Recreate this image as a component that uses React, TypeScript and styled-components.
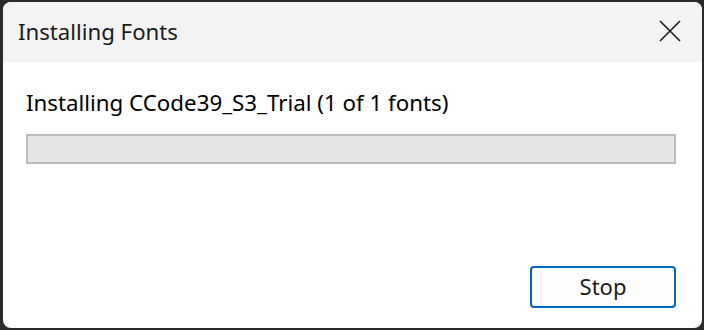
import React from 'react'
import styled, { createGlobalStyle } from 'styled-components'

const GlobalStyle = createGlobalStyle`
  html, body {
    margin: 0;
    padding: 0;
    background: #2b2b2b;
  }
  body {
    font-family: 'Noto Sans', 'Segoe UI', sans-serif;
  }
`

const Frame = styled.div`
  width: 704px;
  height: 330px;
  box-sizing: border-box;
  padding: 2px 2px 2px 3px;
  background: #2b2b2b;
`

const Window = styled.div`
  height: 100%;
  display: flex;
  flex-direction: column;
  background: #ffffff;
  border-radius: 8px;
  overflow: hidden;
`

const TitleBar = styled.div`
  height: 60px;
  flex-shrink: 0;
  display: flex;
  align-items: center;
  justify-content: space-between;
  background: #f3f3f3;
  padding: 0 0 0 15px;
`

const Title = styled.span`
  font-size: 22.2px;
  color: #1a1a1a;
  margin-top: -2px;
`

const CloseButton = styled.button`
  width: 64px;
  height: 56px;
  border: none;
  background: transparent;
  display: flex;
  align-items: center;
  justify-content: center;
  padding: 0;
  margin-top: -2px;
`

const Body = styled.div`
  flex: 1;
  display: flex;
  flex-direction: column;
  padding: 27px 26px 20px 23px;
`

const Message = styled.div`
  font-size: 22.3px;
  color: #000;
  line-height: 28px;
`

const ProgressTrack = styled.div`
  margin-top: 17px;
  height: 30px;
  box-sizing: border-box;
  border: 2px solid #bcbcbc;
  background: #e6e6e6;
`

const Footer = styled.div`
  margin-top: auto;
  display: flex;
  justify-content: flex-end;
`

const Button = styled.button`
  width: 146px;
  height: 42px;
  box-sizing: border-box;
  border: 2px solid #0067c0;
  border-radius: 4px;
  background: #fdfdfd;
  font-family: inherit;
  font-size: 22px;
  color: #1a1a1a;
  padding: 0 0 2px;
`

const App = () => {
  return (
    <>
      <GlobalStyle />
      <Frame>
        <Window>
          <TitleBar>
            <Title>Installing Fonts</Title>
            <CloseButton aria-label="Close">
              <svg width="22" height="22" viewBox="0 0 22 22">
                <path d="M1 1 L21 21 M21 1 L1 21" stroke="#1a1a1a" strokeWidth="1.6" fill="none" />
              </svg>
            </CloseButton>
          </TitleBar>
          <Body>
            <Message>Installing CCode39_S3_Trial (1 of 1 fonts)</Message>
            <ProgressTrack />
            <Footer>
              <Button>Stop</Button>
            </Footer>
          </Body>
        </Window>
      </Frame>
    </>
  )
}

export default App
